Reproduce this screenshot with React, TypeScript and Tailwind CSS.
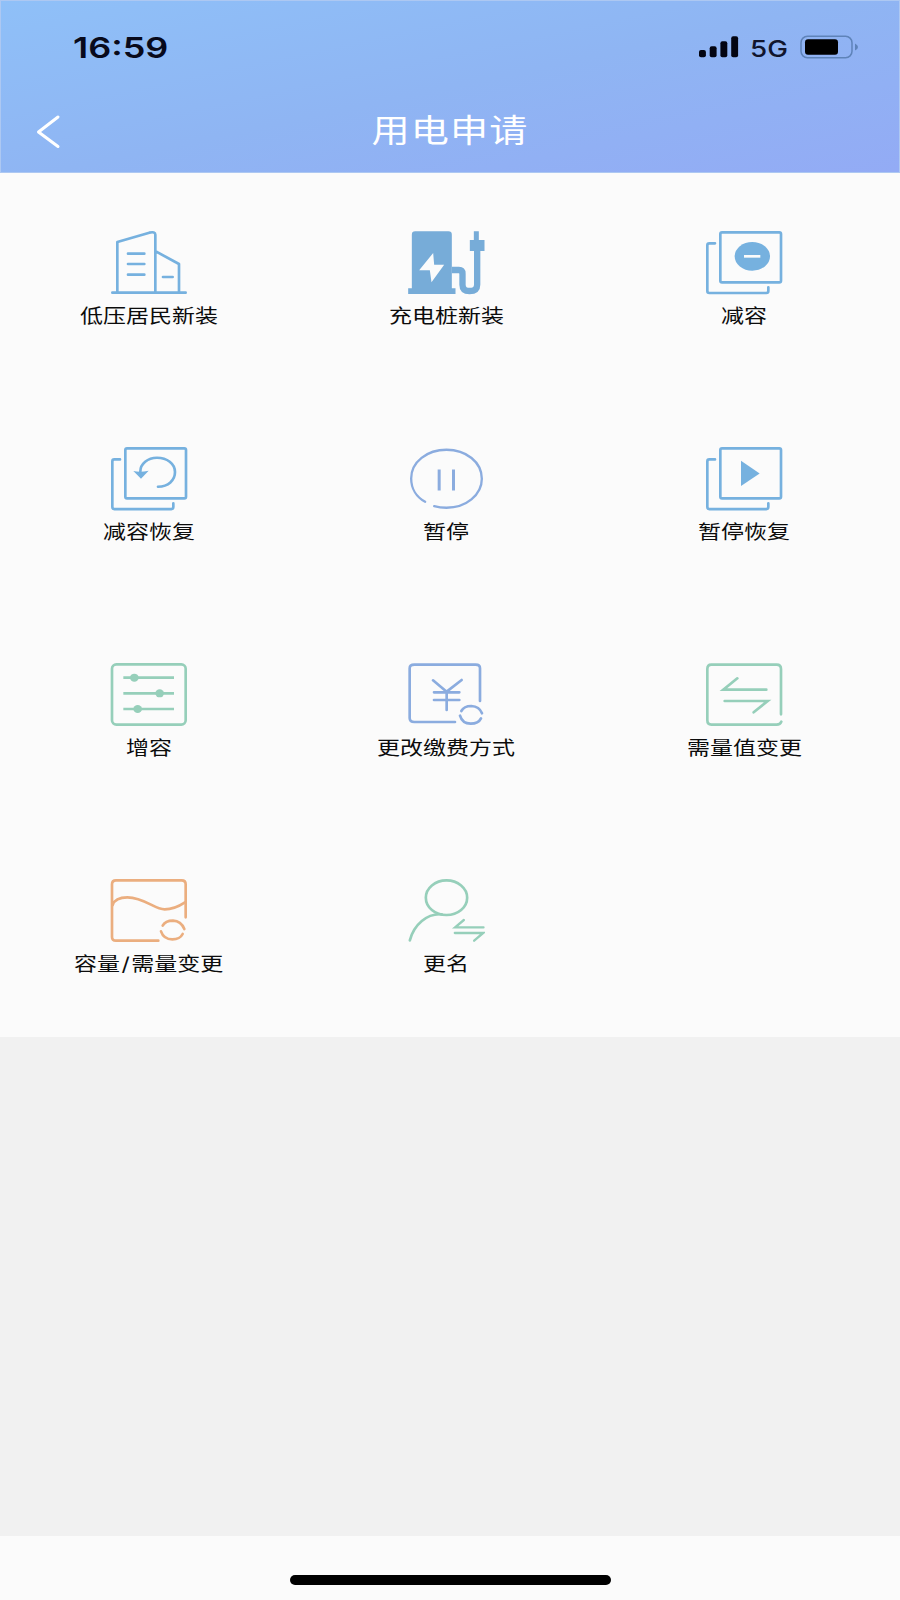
import type { ReactNode } from "react";

const BLUE = "#76b1df";
const INDIGO = "#8bacdf";
const GREEN = "#96cfba";
const ORANGE = "#ebae7f";

function Icon({ box, color, width = 8, children }: { box: string; color: string; width?: number; children: ReactNode }) {
  return (
    <svg
      className="h-[66px] w-[78px] shrink-0"
      viewBox={box}
      fill="none"
      stroke={color}
      strokeWidth={width}
      strokeLinecap="round"
      strokeLinejoin="round"
    >
      {children}
    </svg>
  );
}

function Frames() {
  return (
    <>
      <rect x="181" y="51" width="182" height="150" rx="5" />
      <path d="M165 84H148Q142 84 142 90V227Q142 233 148 233H319Q325 233 325 227V216" />
    </>
  );
}

const items: { label: ReactNode; icon: ReactNode }[] = [
  {
    label: "低压居民新装",
    icon: (
      <Icon box="150 44 234 198" color={BLUE}>
        <path d="M157 232H377M172 231V80L268 52Q286 48 286 58V231M289 109L357 146V231M204 115H253M204 146H253M204 178H253M309 185H338" />
      </Icon>
    ),
  },
  {
    label: "充电桩新装",
    icon: (
      <Icon box="141.5 44 234 198" color="#77acd8">
        <path d="M156 219V58Q156 48 166 48H266Q276 48 276 58V219H287V236H145V219Z" fill="#77acd8" stroke="none" />
        <path d="M220 113L178 165H210L215 201L253 148H223Z" fill="#fbfbfb" stroke="none" />
        <path d="M276 164H297Q308 164 308 175V208Q308 227 329 227Q352 227 352 208V107" strokeWidth="19" strokeLinecap="butt" />
        <path d="M342 48H357V74H374V107H330V74H342Z" fill="#77acd8" stroke="none" />
      </Icon>
    ),
  },
  {
    label: "减容",
    icon: (
      <Icon box="135 44 234 198" color={BLUE}>
        <Frames />
        <ellipse cx="277" cy="123" rx="53" ry="43" fill={BLUE} stroke="none" />
        <path d="M252 123H301" stroke="#fbfbfb" strokeLinecap="butt" />
      </Icon>
    ),
  },
  {
    label: "减容恢复",
    icon: (
      <Icon box="150 47.75 234 198" color={BLUE}>
        <g transform="translate(15 4)">
          <Frames />
        </g>
        <path d="M294 170C325 169 345 151 345 126C345 101 321 83 291 83C263 83 241 101 241 124" />
        <path d="M220 123Q241 127 266 122L243 146Z" fill={BLUE} stroke="none" />
      </Icon>
    ),
  },
  {
    label: "暂停",
    icon: (
      <Icon box="141.5 47.75 234 198" color={INDIGO}>
        <path d="M196 215C170 201 154 175 154 145C154 95 202 59 260 59C319 59 366 96 366 146C366 195 318 233 260 233Q240 233 223 228" strokeWidth="7" />
        <path d="M238 118V181M281 118V181" strokeWidth="9" strokeLinecap="butt" />
      </Icon>
    ),
  },
  {
    label: "暂停恢复",
    icon: (
      <Icon box="135 47.75 234 198" color={BLUE}>
        <g transform="translate(0 4)">
          <Frames />
        </g>
        <path d="M243 92L299 130L243 168Z" fill={BLUE} stroke="none" />
      </Icon>
    ),
  },
  {
    label: "增容",
    icon: (
      <Icon box="150 36 234 198" color={GREEN}>
        <rect x="156" y="43" width="221" height="181" rx="13" />
        <path d="M190 83H342M190 130H342M190 177H342" strokeLinecap="butt" />
        <g fill={GREEN} stroke="none">
          <ellipse cx="223" cy="83" rx="13" ry="12" />
          <ellipse cx="299" cy="130" rx="13" ry="12" />
          <ellipse cx="233" cy="177" rx="13" ry="12" />
        </g>
      </Icon>
    ),
  },
  {
    label: "更改缴费方式",
    icon: (
      <Icon box="141 36 234 198" color={INDIGO}>
        <path d="M285 216H163Q149 216 149 204V55Q149 44 163 44H347Q360 44 360 55V153" />
        <path d="M219 91L260 125L305 90M222 127H298M222 150H298M260 125V180" />
        <path d="M304 183Q312 168 334 168Q358 169 366 190M300 197Q307 221 332 221Q355 221 363 205" />
      </Icon>
    ),
  },
  {
    label: "需量值变更",
    icon: (
      <Icon box="135 36 234 198" color={GREEN}>
        <path d="M363 193V57Q363 44 350 44H154Q142 44 142 57V211Q142 224 154 224H350Q361 224 364 215" />
        <path d="M232 85L190 119H319M194 153H323L281 187" strokeMiterlimit="8" strokeLinejoin="miter" />
      </Icon>
    ),
  },
  {
    label: (
      <>
        容量<span className="px-[1.2px]">/</span>需量变更
      </>
    ),
    icon: (
      <Icon box="150 40 234 198" color={ORANGE}>
        <path d="M295 228H168Q156 228 156 217V59Q156 47 168 47H365Q377 47 377 59V158" />
        <path d="M158 121C163 105 179 98 202 98C254 99 284 134 314 134Q343 134 375 113" />
        <path d="M308 183Q316 168 339 168Q363 169 373 193M303 200Q311 224 337 224Q360 224 368 208" />
      </Icon>
    ),
  },
  {
    label: "更名",
    icon: (
      <Icon box="141.5 40 234 198" color={GREEN}>
        <ellipse cx="260" cy="99" rx="62" ry="52" />
        <path d="M246 149C202 145 162 180 150 227" />
        <path d="M312 166L286 188H371M285 205H370L343 228" strokeWidth="7" strokeLinejoin="miter" />
      </Icon>
    ),
  },
];

export default function App() {
  return (
    <div className="flex h-[1600px] w-[900px] flex-col overflow-hidden bg-[#f1f1f1] font-['Inter','Noto_Sans_CJK_SC',sans-serif]">
      <header className="h-[173px] shrink-0 border border-[#adc8f2] bg-[linear-gradient(168deg,#8fc0f8_0%,#8fb5f3_50%,#93abf5_100%)]">
        <div className="flex h-[92px] items-center justify-between pr-[40px] pl-[72px]">
          <div className="origin-left scale-x-[1.24] text-[29px] leading-none font-semibold text-[#080a1b]">16:59</div>
          <div className="flex items-center">
            <svg className="h-[22px] w-[40px]" viewBox="0 0 40 22" fill="#030512">
              <rect x="0" y="14" width="6.9" height="7.3" rx="2" />
              <rect x="10.7" y="10.3" width="6.9" height="11" rx="2" />
              <rect x="21.4" y="5.3" width="6.9" height="16" rx="2" />
              <rect x="32.2" y="0.3" width="6.9" height="21" rx="2" />
            </svg>
            <span className="mt-[3px] ml-[11px] w-[39px] origin-left scale-x-[1.18] text-[23.5px] leading-none font-medium text-[#11152d]">5G</span>
            <svg className="ml-[11px] h-[24px] w-[59px]" viewBox="0 0 59 24" fill="none">
              <rect x="1" y="1.2" width="51" height="21.6" rx="6.5" stroke="#5e83b9" strokeWidth="1.5" />
              <rect x="5" y="4.2" width="33" height="15.6" rx="3" fill="#000" />
              <path d="M55 8.5Q58 10 58 12Q58 14 55 15.5Z" fill="#5e83b9" />
            </svg>
          </div>
        </div>
        <div className="grid h-[76px] grid-cols-[100px_1fr_100px] items-center">
          <svg className="ml-[35px] h-[36px] w-[28px]" viewBox="0 0 28 36" fill="none" stroke="#fff" strokeWidth="3" strokeLinecap="round" strokeLinejoin="round">
            <path d="M22 4L2.5 19L22 33.5" />
          </svg>
          <h1 className="flex justify-center">
            <span className="scale-x-[1.19] text-[32px] leading-none font-normal tracking-[1px] whitespace-nowrap text-white">用电申请</span>
          </h1>
        </div>
      </header>

      <main className="h-[864px] shrink-0 bg-[#fbfbfb]">
        <div className="grid h-full w-[893px] grid-cols-3 grid-rows-4">
          {items.map((item, index) => (
            <div key={index} className="flex flex-col items-center pt-[57px]">
              {item.icon}
              <span className="mt-[10px] scale-x-[1.21] text-[19px] leading-[22px] whitespace-nowrap text-[#0c0c0c]">{item.label}</span>
            </div>
          ))}
        </div>
      </main>

      <footer className="mt-auto flex h-[64px] shrink-0 justify-center bg-[#fbfbfb] pt-[39px]">
        <div className="h-[10px] w-[321px] rounded-full bg-black" />
      </footer>
    </div>
  );
}
